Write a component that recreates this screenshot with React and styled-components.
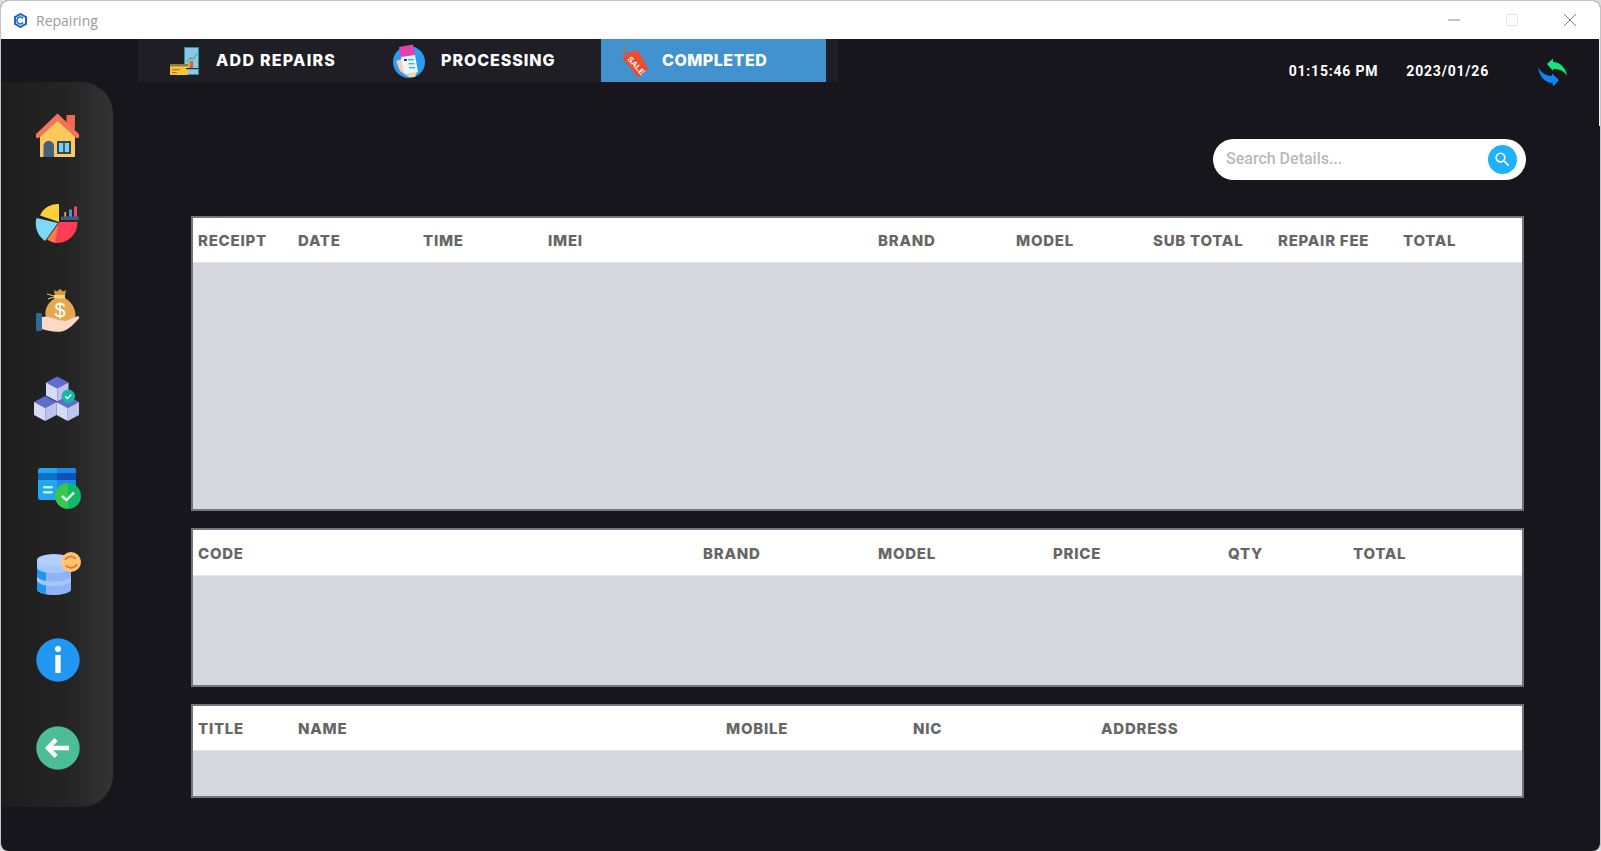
import React from 'react'
import styled, { createGlobalStyle } from 'styled-components'
import { MdSearch } from 'react-icons/md'

const GlobalStyle = createGlobalStyle`
  html, body {
    margin: 0;
    padding: 0;
    height: 100%;
    background: #dcdcdc;
    overflow: hidden;
  }
  * {
    box-sizing: border-box;
  }
`

const Window = styled.div`
  position: relative;
  width: 1601px;
  height: 851px;
  display: flex;
  flex-direction: column;
  background: #16161c;
  border: 1px solid #c4c4c4;
  border-bottom: none;
  border-radius: 8px;
  overflow: hidden;
`

// thin light sliver left on the right edge of the captured window
const EdgeSliver = styled.div`
  position: absolute;
  top: 38px;
  right: 0;
  width: 1px;
  height: 87px;
  background: #f4f4f4;
`

const TitleBar = styled.div`
  height: 38px;
  flex: none;
  display: flex;
  align-items: center;
  background: #ffffff;
  padding-left: 12px;
`

const AppName = styled.span`
  margin-left: 8px;
  font: 400 14px 'Open Sans', sans-serif;
  color: #9a9a9a;
`

const WindowControls = styled.div`
  margin-left: auto;
  display: flex;
  align-items: center;
  padding-right: 24px;
  gap: 46px;
`

const TopRow = styled.div`
  height: 43px;
  flex: none;
  display: flex;
  padding-left: 137px;
`

const TabBar = styled.nav`
  width: 700px;
  display: flex;
  padding: 0 12px 0 13px;
  background: #1f1e25;
`

const Tab = styled.div`
  width: 225px;
  display: flex;
  align-items: center;
  background: ${(p) => (p.$active ? '#4392d0' : 'transparent')};
  padding-left: ${(p) => p.$inset}px;
  color: #ffffff;
  font: 800 16px 'Inter', sans-serif;
`

const TabLabel = styled.span`
  margin: -2px 0 0 ${(p) => p.$gap}px;
  letter-spacing: ${(p) => p.$tracking}px;
`

const Clock = styled.div`
  margin-left: auto;
  padding: 24px 32px 0 0;
  height: 48px;
  display: flex;
  align-items: flex-start;
  color: #ffffff;
  font: 700 14px 'Roboto', sans-serif;
  letter-spacing: 0.8px;
`

const ClockDate = styled.span`
  margin-left: 28px;
  margin-right: 49px;
`

const Body = styled.div`
  flex: 1;
  display: flex;
  align-items: flex-start;
`

const Sidebar = styled.aside`
  width: 112px;
  height: 725px;
  flex: none;
  display: flex;
  flex-direction: column;
  align-items: center;
  gap: 43.5px;
  padding: 31px 0 0 2px;
  border-radius: 0 32px 32px 0;
  background: linear-gradient(90deg, #1d1d1d 0%, #242424 60%, #343434 100%);
`

const NavIcon = styled.svg`
  width: 44px;
  height: 44px;
  display: block;
  flex: none;
  overflow: visible;
`

const Content = styled.main`
  flex: 1;
  display: flex;
  flex-direction: column;
  padding: 57px 76px 0 78px;
`

const SearchRow = styled.div`
  display: flex;
  justify-content: flex-end;
  margin-bottom: 36px;
`

const SearchBox = styled.div`
  width: 313px;
  height: 41px;
  display: flex;
  align-items: center;
  margin-right: -2px;
  padding: 0 9px 0 13px;
  border-radius: 21px;
  background: #ffffff;
`

const SearchPlaceholder = styled.span`
  flex: 1;
  margin-top: -2px;
  color: #b9b9b9;
  font: 500 16px 'Roboto', sans-serif;
`

const SearchButton = styled.span`
  width: 29px;
  height: 29px;
  display: flex;
  align-items: center;
  justify-content: center;
  border-radius: 50%;
  background: #1fb0ff;
  color: #ffffff;
  font-size: 19px;
`

const Tables = styled.div`
  display: flex;
  flex-direction: column;
  gap: 17px;
`

const TableFrame = styled.section`
  height: ${(p) => p.$height}px;
  border: 2px solid #74747e;
  background: #d6d8e0;
`

const HeaderRow = styled.div`
  height: ${(p) => p.$height}px;
  display: grid;
  grid-template-columns: ${(p) => p.$columns};
  align-items: center;
  padding: 1px 0 0 5px;
  background: #ffffff;
  border-bottom: 1px solid #e6e6e9;
`

const HeaderCell = styled.span`
  color: #666666;
  font: 800 15px 'Inter', sans-serif;
  letter-spacing: 0.75px;
  white-space: nowrap;
`

function DataTable({ height, headerHeight = 45, columns, labels }) {
  return (
    <TableFrame $height={height}>
      <HeaderRow $height={headerHeight} $columns={columns}>
        {labels.map((label, i) => (
          <HeaderCell key={i}>{label}</HeaderCell>
        ))}
      </HeaderRow>
    </TableFrame>
  )
}

const AppLogo = () => (
  <svg width="15" height="15" viewBox="0 0 15 15">
    <path d="M7.5 1 L13 4.2 V10.8 L7.5 14 L2 10.8 V4.2 Z" fill="none" stroke="#1a63d8" strokeWidth="2" />
    <path d="M10 5.5 A3.4 3.4 0 1 0 10 9.5" fill="none" stroke="#1a63d8" strokeWidth="1.5" />
  </svg>
)

const MinimizeGlyph = () => (
  <svg width="12" height="12" viewBox="0 0 12 12">
    <path d="M0 6 H12" stroke="#8a8a8a" strokeWidth="1" />
  </svg>
)

const MaximizeGlyph = () => (
  <svg width="12" height="12" viewBox="0 0 12 12">
    <rect x="0.5" y="0.5" width="11" height="11" rx="1.5" fill="none" stroke="#e4e4e4" />
  </svg>
)

const CloseGlyph = () => (
  <svg width="12" height="12" viewBox="0 0 12 12">
    <path d="M0 0 L12 12 M12 0 L0 12" stroke="#7a7a7a" strokeWidth="1" />
  </svg>
)

const HomeIcon = () => (
  <NavIcon viewBox="0 0 44 44">
    <rect x="30.5" y="2" width="8.5" height="14" fill="#ee6a52" />
    <path d="M4 20 L21.5 4 L39 20 V44 H4 Z" fill="#fdc95a" />
    <path d="M0 21 L21.5 0.5 L43 21 V24.5 Q41 26 39 24 L21.5 8 L4 24 Q2 26 0 24.5 Z" fill="#f2735a" />
    <path d="M7.5 44 V33 A5 5 0 0 1 18 33 V44 Z" fill="#47607a" />
    <rect x="21" y="28" width="14" height="13" fill="#33475c" />
    <rect x="23" y="30" width="4.2" height="9" fill="#7fcdf2" />
    <rect x="28.8" y="30" width="4.2" height="9" fill="#7fcdf2" />
  </NavIcon>
)

const ChartIcon = () => (
  <NavIcon viewBox="0 0 44 44">
    <path d="M23 21 V3 A19 19 0 0 0 4 14.5 Z" fill="#fdd03b" />
    <path d="M22 22 L0.5 17 A21 21 0 0 0 9 40 Z" fill="#7fd8f7" />
    <path d="M23 22 L11 38.5 A21 21 0 0 0 20 42 Z" fill="#ff7a45" />
    <path d="M23 21 H41.5 A20.5 20.5 0 0 1 19 42 Z" fill="#ff3d55" />
    <rect x="28.3" y="11" width="1.8" height="5" fill="#e8a93b" />
    <rect x="33" y="8.5" width="3" height="7.5" fill="#4d8fd6" />
    <rect x="38" y="5.5" width="3" height="10.5" fill="#e84a63" />
    <rect x="25" y="15.5" width="18" height="3.5" fill="#49587a" />
  </NavIcon>
)

const MoneyIcon = () => (
  <NavIcon viewBox="0 0 44 44">
    <path d="M18 2 L21 3.5 L24 1 L27 3.5 L30 2 L29 8 H19 Z" fill="#d89a3e" />
    <path d="M19 10 H29 C38 15 42 26 38 35 H12 C7 26 9 16 19 10 Z" fill="#e3a850" />
    <rect x="18" y="7" width="11" height="3.4" fill="#f7d57c" />
    <path d="M11 6 L18 8 M12 11 L18 9" stroke="#f4cf7a" strokeWidth="1" />
    <text x="24" y="29" textAnchor="middle" fill="#ffffff" fontFamily="Liberation Sans" fontWeight="400" fontSize="20">$</text>
    <rect x="0" y="25" width="6" height="18" rx="1.5" fill="#2f6c94" />
    <path d="M6 29 C12 28 17 30 22 32 L30 33 L42 28 Q44.5 29.5 42 31.5 C38 36 32 42 26 43.5 C18 44.5 11 42.5 6 41 Z" fill="#fdd8c9" />
  </NavIcon>
)

const Cube = ({ x, y }) => (
  <g transform={`translate(${x} ${y})`}>
    <path d="M0 6 L11.25 0 L22.5 6 L11.25 12 Z" fill="#5d6dd1" />
    <path d="M0 6 L11.25 12 V25 L0 19 Z" fill="#d6dbf8" />
    <path d="M22.5 6 L11.25 12 V25 L22.5 19 Z" fill="#bcc3f0" />
  </g>
)

const BoxesIcon = () => (
  <NavIcon viewBox="0 0 44 44">
    <Cube x={10} y={0.5} />
    <Cube x={-2} y={20} />
    <Cube x={20.5} y={20} />
    <circle cx="32.3" cy="20.2" r="6.7" fill="#16b79c" />
    <path d="M29.3 20.2 L31.5 22.4 L35.3 18.4" fill="none" stroke="#ffffff" strokeWidth="1.4" />
  </NavIcon>
)

const CardIcon = () => (
  <NavIcon viewBox="-2 -5 44 44">
    <rect x="0" y="0" width="38" height="32" rx="2.5" fill="#1ea8ef" />
    <path d="M19 0 H35.5 A2.5 2.5 0 0 1 38 2.5 V32 H19 Z" fill="#1a88f0" />
    <rect x="0" y="5" width="19" height="7" fill="#0f6fc4" />
    <rect x="19" y="5" width="19" height="7" fill="#0d52b8" />
    <rect x="5" y="18" width="10" height="2.6" rx="1" fill="#bfeaff" />
    <rect x="5" y="23" width="10" height="2.6" rx="1" fill="#bfeaff" />
    <path d="M30 15 A13 13 0 0 0 30 41 Z" fill="#35c84c" />
    <path d="M30 15 A13 13 0 0 1 30 41 Z" fill="#12b76a" />
    <path d="M24 28 L28.5 32 L36 24.5" fill="none" stroke="#e8fff0" strokeWidth="2.4" />
  </NavIcon>
)

const DatabaseIcon = () => (
  <NavIcon viewBox="-1 -1 44 44">
    <path d="M0 8 V37 A17 6 0 0 0 34 37 V8 Z" fill="#a6c6ff" />
    <path d="M0 15 A17 6 0 0 0 9 20.4 V29 A17 6 0 0 1 0 23 Z" fill="#1e96ee" />
    <path d="M0 28 A17 6 0 0 0 9 33.4 V42 A17 6 0 0 1 0 36 Z" fill="#1e96ee" />
    <path d="M9 20.4 A17 6 0 0 0 34 15 V23 A17 6 0 0 1 9 29 Z" fill="#8fb4f5" />
    <path d="M9 33.4 A17 6 0 0 0 34 28 V36 A17 6 0 0 1 9 42 Z" fill="#8fb4f5" />
    <ellipse cx="17" cy="8" rx="17" ry="6" fill="#b4ceff" />
    <circle cx="34" cy="10" r="10" fill="#ffc76a" />
    <path d="M28 8 A6.5 6.5 0 0 1 39 7 M40 12 A6.5 6.5 0 0 1 29 13.5" fill="none" stroke="#f0604f" strokeWidth="1.5" />
  </NavIcon>
)

const InfoIcon = () => (
  <NavIcon viewBox="0 0 44 44">
    <circle cx="22" cy="22" r="21.7" fill="#2196f3" />
    <circle cx="22" cy="11" r="3" fill="#ffffff" />
    <rect x="19.3" y="17" width="5.4" height="18" fill="#ffffff" />
  </NavIcon>
)

const BackIcon = () => (
  <NavIcon viewBox="0 0 44 44">
    <circle cx="22" cy="22" r="21.7" fill="#4dbd98" />
    <path d="M20 13.5 L12 22 L20 30.5 M13 22 H33" fill="none" stroke="#ffffff" strokeWidth="4.4" />
  </NavIcon>
)

const RepairsTabIcon = () => (
  <svg width="30" height="28" viewBox="0 0 30 28">
    <rect x="14.5" y="0.5" width="14" height="27" fill="#86c8e6" stroke="#2f8f9c" strokeWidth="1" />
    <path d="M17 15 L20 11 L23 12 L27 7" fill="none" stroke="#3a9e6a" strokeWidth="1" />
    <rect x="18" y="15" width="2" height="6" fill="#e8a93b" />
    <rect x="20" y="14" width="3" height="7" fill="#d9603c" />
    <rect x="0" y="17" width="18" height="11" fill="#f4c53a" />
    <rect x="0" y="17" width="18" height="2.4" fill="#8f7a3a" />
    <rect x="2" y="22" width="8" height="1.2" fill="#d9603c" />
    <rect x="2" y="25" width="5" height="1.2" fill="#d9603c" />
    <rect x="16" y="21" width="14" height="1.2" fill="#23323f" />
  </svg>
)

const ProcessingTabIcon = () => (
  <svg width="32" height="34" viewBox="0 0 32 34">
    <circle cx="16" cy="18" r="16" fill="#2a9df2" />
    <path d="M6 3 L20 0.5 L23 18 L9 20 Z" fill="#e63fae" />
    <path d="M3 17 L12 14 L24 28 L22 33 H16 L7 27 Z" fill="#f7cfae" />
    <path d="M8 13 L22 11 L25 28 L11 30 Z" fill="#e6f6fb" />
    <rect x="11" y="15" width="3" height="2" fill="#27445f" />
    <rect x="15" y="15" width="6" height="1.4" fill="#2fc4c0" />
    <rect x="15.5" y="19" width="6" height="1.4" fill="#2fc4c0" />
    <rect x="16" y="23" width="6" height="1.4" fill="#2fc4c0" />
  </svg>
)

const SaleTabIcon = () => (
  <svg width="29" height="34" viewBox="0 0 29 34">
    <path d="M5 1 Q3 8 8 12" fill="none" stroke="#7a7f8c" strokeWidth="3" />
    <path d="M8 8.5 L18 6.5 L28 24.5 L18 33.5 L2 13.5 Z" fill="#ee4b2b" />
    <text x="0" y="0" transform="translate(7 15.5) rotate(48)" fill="#ffffff" fontFamily="Liberation Sans" fontWeight="700" fontSize="8">SALE</text>
  </svg>
)

const RefreshIcon = () => (
  <svg width="30" height="29" viewBox="0 0 30 29" style={{ marginTop: -5 }}>
    <path d="M9 6 L15 0.5 V4 C22 4 28 10 29 18 C26 13 21 10.5 15 11 V13 Z" fill="#12e676" />
    <path d="M21 22 L15 28.5 L14.5 25 C7 25 1 18 0 9 C2 14 8 18 14 18 L14 15.5 Z" fill="#0e86f5" />
  </svg>
)

const sideIcons = [HomeIcon, ChartIcon, MoneyIcon, BoxesIcon, CardIcon, DatabaseIcon, InfoIcon, BackIcon]

const App = () => (
  <>
    <GlobalStyle />
    <Window>
      <EdgeSliver />
      <TitleBar>
        <AppLogo />
        <AppName>Repairing</AppName>
        <WindowControls>
          <MinimizeGlyph />
          <MaximizeGlyph />
          <CloseGlyph />
        </WindowControls>
      </TitleBar>
      <TopRow>
        <TabBar>
          <Tab $inset={19}>
            <RepairsTabIcon />
            <TabLabel $gap={16} $tracking={1.25}>ADD REPAIRS</TabLabel>
          </Tab>
          <Tab $inset={17}>
            <ProcessingTabIcon />
            <TabLabel $gap={16} $tracking={0.95}>PROCESSING</TabLabel>
          </Tab>
          <Tab $active $inset={19}>
            <SaleTabIcon />
            <TabLabel $gap={13} $tracking={0.5}>COMPLETED</TabLabel>
          </Tab>
        </TabBar>
        <Clock>
          <span>01:15:46 PM</span>
          <ClockDate>2023/01/26</ClockDate>
          <RefreshIcon />
        </Clock>
      </TopRow>
      <Body>
        <Sidebar>
          {sideIcons.map((Icon, i) => (
            <Icon key={i} />
          ))}
        </Sidebar>
        <Content>
          <SearchRow>
            <SearchBox>
              <SearchPlaceholder>Search Details...</SearchPlaceholder>
              <SearchButton>
                <MdSearch />
              </SearchButton>
            </SearchBox>
          </SearchRow>
          <Tables>
            <DataTable
              height={295}
              columns="100px 125px 125px 330px 138px 137px 125px 125px 1fr"
              labels={['RECEIPT', 'DATE', 'TIME', 'IMEI', 'BRAND', 'MODEL', 'SUB TOTAL', 'REPAIR FEE', 'TOTAL']}
            />
            <DataTable
              height={159}
              headerHeight={46}
              columns="505px 175px 175px 175px 125px 1fr"
              labels={['CODE', 'BRAND', 'MODEL', 'PRICE', 'QTY', 'TOTAL']}
            />
            <DataTable
              height={94}
              columns="100px 428px 187px 188px 1fr"
              labels={['TITLE', 'NAME', 'MOBILE', 'NIC', 'ADDRESS']}
            />
          </Tables>
        </Content>
      </Body>
    </Window>
  </>
)

export default App
